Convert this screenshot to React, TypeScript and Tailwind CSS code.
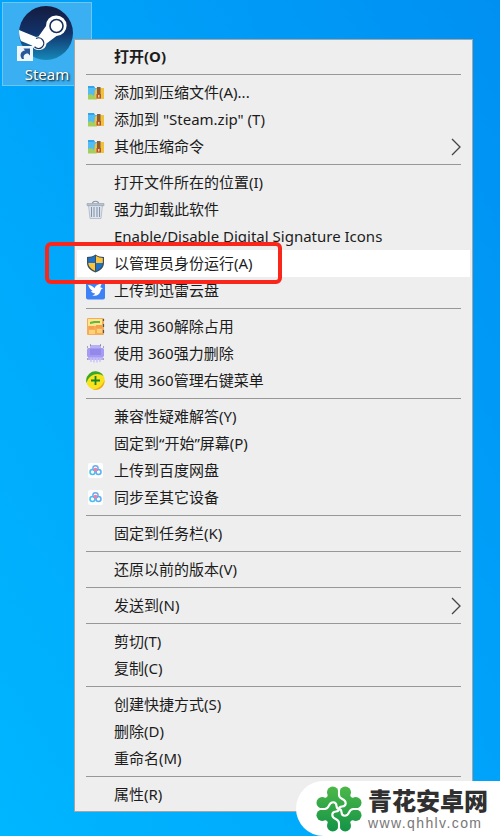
import React from 'react';

type IconName = 'zip' | 'trash' | 'shield' | 'bird' | 'unlock' | 'shred' | 'plus' | 'cloud';

interface MenuEntry {
  label: string;
  icon?: IconName;
  bold?: boolean;
  active?: boolean;
  submenu?: boolean;
}

const groups: MenuEntry[][] = [
  [{ label: '打开(O)', bold: true }],
  [
    { label: '添加到压缩文件(A)...', icon: 'zip' },
    { label: '添加到 "Steam.zip" (T)', icon: 'zip' },
    { label: '其他压缩命令', icon: 'zip', submenu: true }
  ],
  [
    { label: '打开文件所在的位置(I)' },
    { label: '强力卸载此软件', icon: 'trash' },
    { label: 'Enable/Disable Digital Signature Icons' },
    { label: '以管理员身份运行(A)', icon: 'shield', active: true },
    { label: '上传到迅雷云盘', icon: 'bird' }
  ],
  [
    { label: '使用 360解除占用', icon: 'unlock' },
    { label: '使用 360强力删除', icon: 'shred' },
    { label: '使用 360管理右键菜单', icon: 'plus' }
  ],
  [
    { label: '兼容性疑难解答(Y)' },
    { label: '固定到“开始”屏幕(P)' },
    { label: '上传到百度网盘', icon: 'cloud' },
    { label: '同步至其它设备', icon: 'cloud' }
  ],
  [{ label: '固定到任务栏(K)' }],
  [{ label: '还原以前的版本(V)' }],
  [{ label: '发送到(N)', submenu: true }],
  [{ label: '剪切(T)' }, { label: '复制(C)' }],
  [{ label: '创建快捷方式(S)' }, { label: '删除(D)' }, { label: '重命名(M)' }],
  [{ label: '属性(R)' }]
];

const icons: Record<IconName, React.ReactNode> = {
  zip: (
    <>
      <path d="M2 3h6l1 2h9v7H2z" fill="#35a3ea" />
      <path d="M2 5h9v10H2z" fill="#52bdf3" />
      <path d="M9 7c2-2 5-2 9-2v11H8z" fill="#efc13c" />
      <path d="M2 12c3-2 6 0 9 4.500H2z" fill="#a5cf5b" />
      <path d="M11 4h3.500v8H11z" fill="#8d5b35" />
      <path d="M10.500 11h4.500v4.500h-4.500z" fill="#b5532a" />
      <path d="M12.200 12h1.200v2.500h-1.200z" fill="#fbe9c0" />
    </>
  ),
  trash: (
    <>
      <path d="M2.500 5h14l-1.500 13.500H4z" fill="#dfe6ef" stroke="#9aa5b5" strokeWidth=".6" />
      <path d="M5.500 7v10M8 7v10M11 7v10M13.500 7v10" stroke="#8493a8" strokeWidth="1.100" />
      <path d="M6.500 3.500c0-3 6-3 6 0" fill="none" stroke="#8996a7" strokeWidth="1.200" />
      <path d="M1 3.500h17v2.200H1z" fill="#b6c2d0" stroke="#8996a7" strokeWidth=".5" />
    </>
  ),
  shield: (
    <>
      <path d="M9.500.5C7 2.300 4 3 1 3v6c0 5 4 7.500 8.500 9.500C14 16.500 18 14 18 9V3c-3 0-6-.7-8.500-2.500z" fill="#39505f" />
      <path d="M9 2C7 3.300 4.500 4 2.200 4v5H9z" fill="#1d72c8" />
      <path d="M10 2c2 1.300 4.500 2 6.800 2v5H10z" fill="#ffc33a" />
      <path d="M2.300 9H9v8C5.500 15.300 2.600 13 2.300 9z" fill="#ffc33a" />
      <path d="M16.700 9H10v8c3.500-1.700 6.400-4 6.700-8z" fill="#1d72c8" />
    </>
  ),
  bird: (
    <>
      <rect x="0" y="0" width="19" height="18.500" rx="2" fill="#3f82f5" />
      <path d="M2 4c3 .2 5 1.300 6.500 3.200C9 5 11.500 3.200 16 2.500c-1 1.500-1.500 2.700-1.700 3.800.8.500 1.500.8 2.700.9-1.500.5-2 1.200-2.500 2.800-.8 3.500-4 5.500-8.300 4.500 1.400-.4 2.400-1 3-2-2-.2-3.500-1.100-4.200-2.600h1.700C4.500 8.500 3 6.700 2 4z" fill="#fff" />
    </>
  ),
  unlock: (
    <>
      <rect x="1" y="1" width="17" height="17" rx="1" fill="#f5ab5c" />
      <path d="M2 2h14v7H2z" fill="#ffe489" />
      <path d="M4 5l4-1h6v2H9l-5 1z" fill="#5eb843" />
      <path d="M3 9h5v3H3zM10 8h6v3h-6z" fill="#f6a04f" />
      <path d="M3 13h6v4H3zM11 12h5v4h-5z" fill="#ffd171" />
      <path d="M17.500 2v2M17.500 7v3M17.500 13v3" stroke="#39635a" strokeWidth="1.200" />
    </>
  ),
  shred: (
    <>
      <path d="M4 1h11v5H4zM2 13h15v3H2z" fill="#b7b0f5" />
      <rect x="1" y="4" width="17" height="9" rx="1.500" fill="#a59cf2" />
      <path d="M4 5h11v6H4z" fill="#9289ea" />
      <path d="M5 14v4M8 14v4.500M11 14v4.500M14 14v4" stroke="#c6c1f8" strokeWidth="1.400" />
      <path d="M1 3h1M17 3h1M1 15h1M17 15h1M4 1h1M14 1h1" stroke="#5b5785" />
    </>
  ),
  plus: (
    <>
      <circle cx="9.500" cy="9.500" r="9.300" fill="#f9e21f" />
      <path d="M.5 12A9.300 9.300 0 0 1 13 1c2 .7 3.500 2.200 4.500 4C12 .8 3 3 .5 12z" fill="#36a82f" />
      <path d="M18.500 9a9 9 0 0 1-12 9.300C13 18 17 14 18.500 9z" fill="#f0a81b" />
      <path d="M9.500 5v9M5 9.500h9" stroke="#16851f" strokeWidth="1.800" />
    </>
  ),
  cloud: (
    <>
      <rect x="2" y="2" width="15" height="15" rx="2" fill="#fbfdff" />
      <circle cx="9.500" cy="7.300" r="2.600" fill="none" stroke="#6aa8ee" strokeWidth="1.400" />
      <circle cx="6.500" cy="11" r="2.500" fill="none" stroke="#45c0ed" strokeWidth="1.500" />
      <circle cx="12.500" cy="11" r="2.500" fill="none" stroke="#5aaef0" strokeWidth="1.500" />
      <circle cx="9.500" cy="8.800" r="2" fill="#ee7fa8" />
    </>
  )
};

const MenuIcon: React.FC<{ name: IconName }> = ({ name }) => (
  <svg viewBox="0 0 19 19" className="size-[19px]" aria-hidden="true">
    {icons[name]}
  </svg>
);

const MenuRow: React.FC<{ entry: MenuEntry }> = ({ entry }) => (
  <li className="relative">
    <button
      type="button"
      role="menuitem"
      className={`flex h-[27px] w-full items-center px-[9px] text-left ${entry.active ? 'bg-white' : ''} ${entry.bold ? 'font-bold' : ''}`}
    >
      <span className="flex w-7 shrink-0 items-center">{entry.icon && <MenuIcon name={entry.icon} />}</span>
      <span className="flex-1 whitespace-nowrap">{entry.label}</span>
      {entry.submenu && (
        <svg viewBox="0 0 10 18" className="h-[18px] w-[10px]" aria-hidden="true">
          <path d="M1 1l8 8-8 8" fill="none" stroke="#444" strokeWidth="1.300" />
        </svg>
      )}
    </button>
    {entry.active && (
      <span className="pointer-events-none absolute -top-2 -left-8 z-10 h-[42px] w-[237px] rounded-md border-4 border-[#f9261b]" />
    )}
  </li>
);

const SteamShortcut = () => (
  <a
    href="#steam"
    className="absolute top-[2px] left-[2px] flex h-[84px] w-[90px] flex-col items-center border border-[#6cc7f7] bg-[#3aaff1] pt-[3px] text-[15px] text-white"
  >
    <svg viewBox="0 0 60 60" className="size-[60px] shrink-0" aria-hidden="true">
      <defs>
        <linearGradient id="steam" x1="0" y1="0" x2="0" y2="1">
          <stop offset="0" stopColor="#141b3e" />
          <stop offset=".5" stopColor="#12336a" />
          <stop offset="1" stopColor="#1688b9" />
        </linearGradient>
      </defs>
      <circle cx="29" cy="27" r="27" fill="url(#steam)" />
      <path d="M2 24l17 7 2.500-.5L29 20a10.300 10.300 0 1 1 10.500 10L29.500 37.500a7.600 7.600 0 0 1-14.500 2L4 35C2.500 32 2 28 2 24z" fill="#fff" />
      <circle cx="39.500" cy="20" r="6.500" fill="#fff" stroke="#17305f" strokeWidth="1.600" />
      <path d="M19 32.500a5.300 5.300 0 1 1-1.500 8.200" fill="none" stroke="#17305f" strokeWidth="1.300" />
      <path d="M0 40h16v15H0z" fill="#eff5fa" />
      <path d="M5 53c-3-4-1-8 3-8.500L6.500 42.500h6.500v7L11 47.500c-4 0-5 2.500-4 5.500z" fill="#28569b" />
    </svg>
    <span className="leading-4 [text-shadow:1px_1px_2px_#000]">Steam</span>
  </a>
);

const SiteBadge = () => (
  <footer className="absolute right-0 bottom-0 flex h-[55px] items-center gap-1.5 rounded-l-full bg-white pr-3 pl-5">
    <svg viewBox="0 0 48 48" className="size-[46px]" aria-hidden="true">
      <defs>
        <linearGradient id="leaf" gradientUnits="userSpaceOnUse" x1="0" y1="0" x2="0" y2="48">
          <stop offset="0" stopColor="#4db848" />
          <stop offset="1" stopColor="#129347" />
        </linearGradient>
      </defs>
      <g fill="url(#leaf)">
        <path d="M12 6Q14 14 6 12V36Q14 34 12 42H36Q34 34 42 36V12Q34 14 36 6Z" />
        {[
          [17.5, 6.5], [30.5, 6.5], [41.500, 17.5], [41.500, 30.5],
          [30.5, 41.500], [17.5, 41.500], [6.5, 30.5], [6.5, 17.5]
        ].map(([x, y]) => (
          <circle key={`${x}-${y}`} cx={x} cy={y} r="6" />
        ))}
      </g>
      <g fill="none" stroke="#fff" strokeWidth="2.200">
        {[0, 90, 180, 270].map((angle) => (
          <path key={angle} transform={`rotate(${angle} 24 24)`} d="M24 0V9C24 15 31 12 31 18S24 19 24 24" />
        ))}
      </g>
    </svg>
    <div className="flex flex-col">
      <strong className="text-2xl leading-7 font-black text-[#303030]">青花安卓网</strong>
      <span className="font-['Liberation_Sans'] text-sm leading-4 tracking-widest text-[#777]">www.qhhlv.com</span>
    </div>
  </footer>
);

export default function App() {
  return (
    <main className="relative min-h-screen overflow-hidden bg-linear-to-bl from-[#0090f2] via-[#00a4fa] to-[#00b6ff] pt-[39px] pr-[27px] pb-6 pl-[74px] font-['Noto_Sans','Noto_Sans_CJK_SC',sans-serif] text-[#1c1c1c]">
      <SteamShortcut />
      <nav className="relative border border-[#a5a5a5] bg-[#eeeeee] px-[2px] py-[3px] text-[15px]" aria-label="Steam">
        {groups.map((group, index) => (
          <React.Fragment key={group[0].label}>
            {index > 0 && <hr className="mx-[9px] my-1 border-t border-[#979797]" />}
            <ul role="menu">
              {group.map((entry) => (
                <MenuRow key={entry.label} entry={entry} />
              ))}
            </ul>
          </React.Fragment>
        ))}
      </nav>
      <SiteBadge />
    </main>
  );
}
